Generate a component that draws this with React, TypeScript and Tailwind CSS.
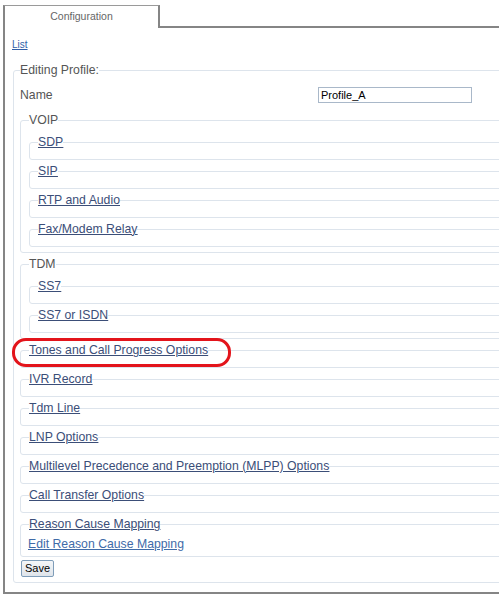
import React from "react";

const FONT = "font-['Liberation_Sans',Arial,sans-serif]";
const LINK = "text-[#3b4e78] underline underline-offset-[1px] decoration-[1px]";

function LinkBox({ label }: { label: string }) {
  return (
    <fieldset className="border border-[#dde4ec] rounded-[3px] pl-[8px] pb-[10px] min-w-0">
      <legend className={`${LINK} leading-[14px]`}>
        <a href="#" className={LINK}>{label}</a>
      </legend>
    </fieldset>
  );
}

function Group({ label, children }: { label: string; children: React.ReactNode }) {
  return (
    <fieldset className="border border-[#dde4ec] rounded-[3px] pl-[8px] pt-[8px] pb-[5px] min-w-0">
      <legend className="text-[#555555] leading-[14px]">{label}</legend>
      <div className="flex flex-col gap-[4px]">{children}</div>
    </fieldset>
  );
}

export default function App() {
  return (
    <div className={`w-[499px] h-[600px] overflow-hidden bg-white relative ${FONT} text-[12.25px]`}>
      <div className="pt-[5px] pl-[3px] w-[560px]">
        <div className="flex">
          <div className="w-[157px] h-[23px] border-t border-t-[#9a9a9a] border-l-2 border-l-[#858585] border-r-2 border-r-[#858585] flex items-start justify-center pt-[4px]">
            <span className="text-[10.5px] leading-[13px] text-[#666666]">Configuration</span>
          </div>
          <div className="flex-1 h-[23px] border-b-2 border-b-[#858585]" />
        </div>
        <div className="border-l-2 border-l-[#858585] border-b-2 border-b-[#858585] pl-[8px] pt-[9px] pb-[9px]">
          <div className="h-[14px] leading-[14px] -ml-[1px]">
            <a href="#" className="text-[10px] text-[#2f5fa8] underline">List</a>
          </div>
          <fieldset className="mt-[12px] border border-[#dde4ec] rounded-[3px] pl-[6px] pt-[10px] pb-[5px] min-w-0">
            <legend className="text-[#555555] leading-[14px]">Editing Profile:</legend>
            <div className="flex items-center h-[16px]">
              <span className="text-[#555555] w-[298px]">Name</span>
              <input
                readOnly
                value="Profile_A"
                className={`w-[154px] h-[16px] border border-[#a9b8c9] bg-white px-[2px] text-[11px] text-black ${FONT} outline-none`}
              />
            </div>
            <div className="mt-[10px] flex flex-col gap-[4px]">
              <Group label="VOIP">
                <LinkBox label="SDP" />
                <LinkBox label="SIP" />
                <LinkBox label="RTP and Audio" />
                <LinkBox label="Fax/Modem Relay" />
              </Group>
              <Group label="TDM">
                <LinkBox label="SS7" />
                <LinkBox label="SS7 or ISDN" />
              </Group>
              <LinkBox label="Tones and Call Progress Options" />
              <LinkBox label="IVR Record" />
              <LinkBox label="Tdm Line" />
              <LinkBox label="LNP Options" />
              <LinkBox label="Multilevel Precedence and Preemption (MLPP) Options" />
              <LinkBox label="Call Transfer Options" />
              <fieldset className="border border-[#dde4ec] rounded-[3px] pl-[8px] pt-[6px] pb-[5px] min-w-0">
                <legend className="leading-[14px]">
                  <a href="#" className={LINK}>Reason Cause Mapping</a>
                </legend>
                <div className="leading-[14px] -ml-[1px]">
                  <a href="#" className="text-[#3f6ba8] underline">Edit Reason Cause Mapping</a>
                </div>
              </fieldset>
            </div>
            <button className={`mt-[3px] ml-[1px] h-[17px] px-[3px] border border-[#7f9db9] rounded-[2px] bg-gradient-to-b from-[#f4f6f8] to-[#dfe4ea] text-[11px] leading-[15px] text-black ${FONT}`}>
              Save
            </button>
          </fieldset>
        </div>
      </div>
      <div className="absolute left-[12px] top-[338px] w-[219px] h-[29px] border-[3px] border-[#e3141b] rounded-[14px]" />
    </div>
  );
}
